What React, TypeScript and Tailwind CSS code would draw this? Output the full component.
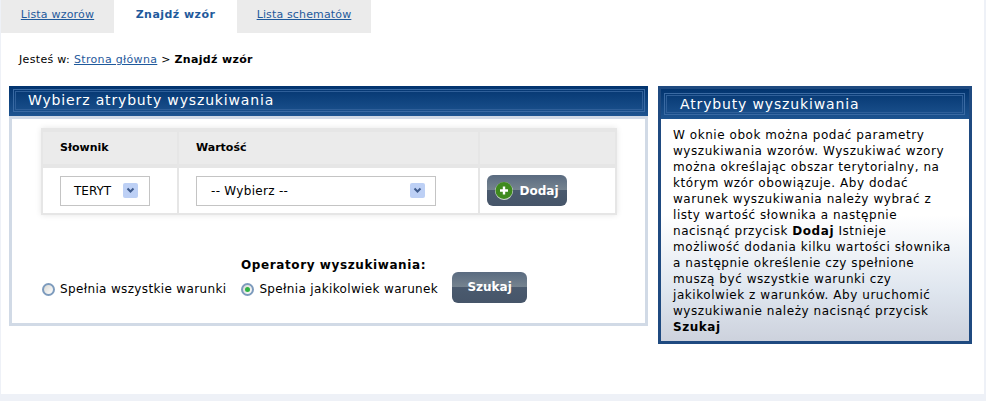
import React from "react";

const font = "font-['DejaVu_Sans',Verdana,sans-serif]";

const Chevron = () => (
  <span className="flex h-[15px] w-[15px] items-center justify-center rounded-[2px] bg-[#bdd0f5]">
    <svg width="9" height="7" viewBox="0 0 9 7">
      <path d="M1.5 1.5 L4.5 4.5 L7.5 1.5" fill="none" stroke="#3f5b8c" strokeWidth="2" />
    </svg>
  </span>
);

const Radio = ({ checked }: { checked?: boolean }) => (
  <span className="flex h-[13px] w-[13px] shrink-0 items-center justify-center rounded-full border-2 border-[#7d9bbd] bg-[linear-gradient(135deg,#d8d8d4,#ffffff)]">
    {checked && <span className="h-[5px] w-[5px] rounded-full bg-[#2fb344]" />}
  </span>
);

const PanelTitle = ({ children, className }: { children: React.ReactNode; className: string }) => (
  <div className={`h-[30px] bg-[linear-gradient(#02346f,#1e5490)] ${className}`}>
    {/* double frame line inside the title bar */}
    <div className="h-full border border-[#3a6aa3] p-px">
      <div className="flex h-full items-center border border-[#2f5f99] text-[14px] tracking-[0.85px] text-white">
        {children}
      </div>
    </div>
  </div>
);

const DarkButton = ({ children, className }: { children: React.ReactNode; className: string }) => (
  <button
    className={`flex items-center justify-center rounded-[6px] bg-[linear-gradient(#5a6b80_0%,#75838f_48%,#4a5a6e_50%,#465569_100%)] text-[12px] font-bold text-white ${className}`}
  >
    {children}
  </button>
);

export default function App() {
  return (
    <div className={`${font} h-[401px] w-[986px] overflow-hidden bg-[#eef1f7] text-[11px] text-black`}>
      <div className="ml-px h-[394px] w-[983px] bg-white">
        {/* Tabs */}
        <nav className="flex h-[33px] text-[11px]">
          <a href="#lista" className="flex w-[113px] items-center justify-center bg-[#ebebeb] pb-[3px] tracking-[0.2px] text-[#1f5a9c] underline">
            Lista wzorów
          </a>
          <a href="#znajdz" className="flex w-[123px] items-center justify-center pb-[3px] font-bold tracking-[0.45px] text-[#1f5a9c]">
            Znajdź wzór
          </a>
          <a href="#schematy" className="flex w-[134px] items-center justify-center bg-[#ebebeb] pb-[3px] tracking-[0.15px] text-[#1f5a9c] underline">
            Lista schematów
          </a>
        </nav>

        {/* Breadcrumb */}
        <p className="mt-[20px] ml-[18px] h-[14px] leading-[14px] tracking-[0.33px]">
          Jesteś w: <a href="#home" className="text-[#1f5a9c] underline">Strona główna</a> &gt; <b>Znajdź wzór</b>
        </p>

        <div className="mt-[19px] ml-[8px] flex items-start gap-[10px]">
          {/* Left panel */}
          <section className="w-[639px]">
            <PanelTitle className="pt-[3px] pr-[3px] pb-[4px] pl-[4px]">
              <span className="pl-[12px]">Wybierz atrybuty wyszukiwania</span>
            </PanelTitle>
            <div className="h-[210px] border-[3px] border-[#d1dae6] pt-[9px]">
              {/* Table */}
              <div className="mx-[29px] w-[576px] bg-[#e6e6e6] p-[2px] shadow-[0_0_6px_rgba(0,0,0,0.1)]">
                <div className="grid grid-cols-[134px_299px_135px] gap-x-[2px] gap-y-[4px] pt-[2px]">
                  <div className="flex h-[32px] items-center bg-[#ebebeb] pl-[17px] font-bold">Słownik</div>
                  <div className="flex h-[32px] items-center bg-[#ebebeb] pl-[17px] font-bold">Wartość</div>
                  <div className="h-[32px] bg-[#ebebeb]" />
                  <div className="flex h-[45px] items-center bg-white pl-[17px]">
                    <div className="flex h-[30px] w-[90px] items-center justify-between border border-[#c4c4c4] pr-[11px] pl-[13px] text-[12px]">
                      TERYT <Chevron />
                    </div>
                  </div>
                  <div className="flex h-[45px] items-center bg-white pl-[17px]">
                    <div className="flex h-[30px] w-[240px] items-center justify-between border border-[#c4c4c4] pr-[10px] pl-[14px] text-[12px] tracking-[0.3px]">
                      -- Wybierz -- <Chevron />
                    </div>
                  </div>
                  <div className="flex h-[45px] items-center bg-white pl-[7px]">
                    <DarkButton className="h-[31px] w-[80px] gap-[6px]">
                      <svg width="18" height="18" viewBox="0 0 18 18">
                        <circle cx="9" cy="9" r="9" fill="#cfd8cf" />
                        <circle cx="9" cy="8.5" r="8.5" fill="#3f8a1e" />
                        <path d="M9 4.5 V12.5 M5 8.5 H13" stroke="#fff" strokeWidth="2.4" />
                      </svg>
                      Dodaj
                    </DarkButton>
                  </div>
                </div>
              </div>

              {/* Operators */}
              <div className="mt-[41px] flex items-start pl-[30px]">
                <div>
                  <p className="ml-[199px] h-[16px] text-[12px] font-semibold tracking-[0.6px]">Operatory wyszukiwania:</p>
                  <div className="mt-[8px] flex items-center text-[12px] tracking-[0.35px]">
                    <Radio />
                    <span className="ml-[5px] mr-[15px]">Spełnia wszystkie warunki</span>
                    <Radio checked />
                    <span className="ml-[5px]">Spełnia jakikolwiek warunek</span>
                  </div>
                </div>
                <DarkButton className="mt-[16px] ml-[14px] h-[31px] w-[75px] pb-[2px]">Szukaj</DarkButton>
              </div>
            </div>
          </section>

          {/* Right panel */}
          <aside className="h-[258px] w-[314px] border-[3px] border-[#1f4a80] bg-[linear-gradient(#ffffff_0%,#ffffff_50%,#dfe6ef_80%,#cdd2dd_100%)]">
            <PanelTitle className="pt-[4px] pr-[4px] pb-[4px] pl-[3px]">
              <span className="pl-[13px]">Atrybuty wyszukiwania</span>
            </PanelTitle>
            <p className="mt-[8px] px-[12px] text-[12px] leading-[16px] tracking-[0.55px]">
              W oknie obok można podać parametry wyszukiwania wzorów. Wyszukiwać wzory można określając obszar
              terytorialny, na którym wzór obowiązuje. Aby dodać warunek wyszukiwania należy wybrać z listy wartość
              słownika a następnie nacisnąć przycisk <b>Dodaj</b> Istnieje możliwość dodania kilku wartości słownika a
              następnie określenie czy spełnione muszą być wszystkie warunki czy jakikolwiek z warunków. Aby uruchomić
              wyszukiwanie należy nacisnąć przycisk <b>Szukaj</b>
            </p>
          </aside>
        </div>
      </div>
    </div>
  );
}
